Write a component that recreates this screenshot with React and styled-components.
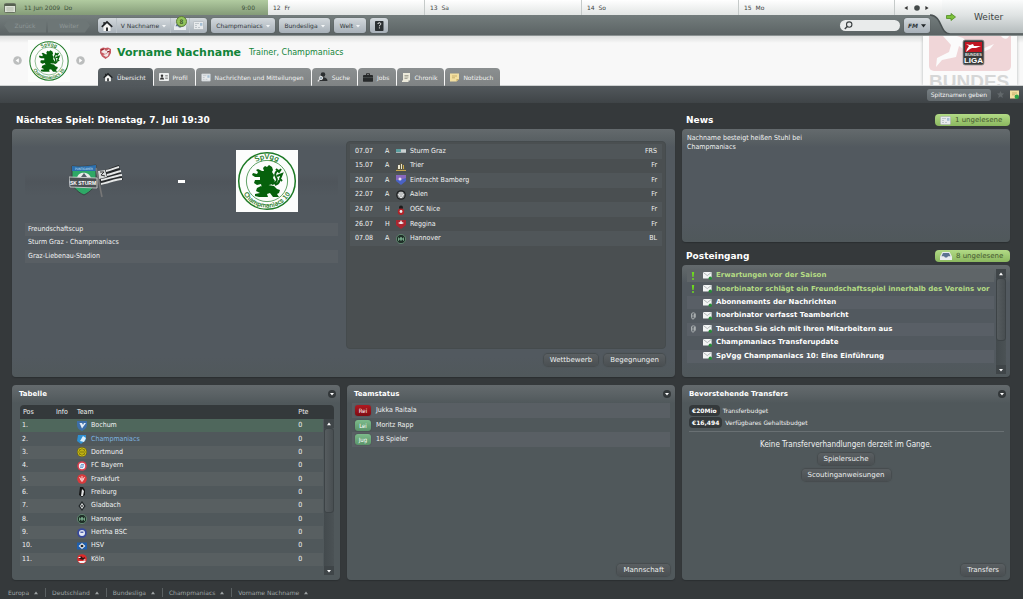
import React from "react";
import styled, { createGlobalStyle, css } from "styled-components";

const Global = createGlobalStyle`
  * { box-sizing: border-box; }
  html, body { margin: 0; padding: 0; background: #35393b; }
  body, button, input, table {
    font-family: "DejaVu Sans Condensed", "DejaVu Sans", Verdana, sans-serif;
    font-size: 7px;
    line-height: 9px;
    color: #f0f2f2;
  }
  button { margin: 0; padding: 0; border: 0; background: none; white-space: nowrap; }
  a { color: inherit; text-decoration: none; }
  h1, h2, h3, p, ul, ol { margin: 0; padding: 0; }
  ul, ol { list-style: none; }
  svg { display: block; flex: none; }
`;

const wide = css`font-family: "DejaVu Sans", Verdana, sans-serif;`;

const Page = styled.div`
  position: relative;
  display: flex;
  flex-direction: column;
  min-height: 100vh;
`;

/* ---------- calendar ---------- */

const Calendar = styled.div`
  ${wide}
  display: grid;
  grid-template-columns: 268fr 157fr 157fr 157fr 156fr 128fr;
  height: 15px;
  font-size: 6px;
  line-height: 15px;
  color: #3c4343;
  background: linear-gradient(#ffffff, #e2e5e4);
`;
const Today = styled.div`
  display: flex;
  align-items: center;
  padding: 0 13px 0 4px;
  color: #3d5138;
  background: linear-gradient(#b1cba0, #849b78);
  time { flex: 1; padding-left: 8px; white-space: pre; }
`;
const Day = styled.div`
  padding-left: 5px;
  white-space: pre;
  border-right: 1px solid #c5cac9;
`;
const DayPager = styled.div`
  display: flex;
  align-items: center;
  gap: 5px;
  padding-left: 9px;
`;
const PagerButton = styled.button`
  width: 5px;
  height: 7px;
`;

/* ---------- toolbar ---------- */

const Toolbar = styled.div`
  ${wide}
  display: flex;
  align-items: center;
  gap: 4px;
  height: 21px;
  padding: 1px 93px 0 4px;
  background: linear-gradient(#747d7d, #5b6364);
  border-bottom: 1px solid #8b9292;
`;
const HistoryButton = styled.button`
  ${wide}
  width: 42px;
  height: 14px;
  font-size: 6px;
  color: #8f9797;
  background: #6d7676;
  clip-path: ${(p) => (p.$back
    ? "polygon(0 50%, 12% 0, 100% 0, 100% 100%, 12% 100%)"
    : "polygon(0 0, 88% 0, 100% 50%, 88% 100%, 0 100%)")};
`;
const History = styled.div`
  display: flex;
  gap: 2px;
  margin-right: 4px;
`;
const NavGroup = styled.div`
  display: flex;
  height: 15px;
  border-radius: 3px;
  background: linear-gradient(#d3d9dd, #a7b0b8);
  box-shadow: 0 0 1px #3d4444;
`;
const NavButton = styled.button`
  ${wide}
  position: relative;
  display: flex;
  align-items: center;
  justify-content: center;
  gap: 3px;
  min-width: ${(p) => p.$min || 18}px;
  padding: 0 3px;
  font-size: 6px;
  color: #30373a;
  & + & { border-left: 1px solid #b9c1c7; }
`;
const Badge = styled.span`
  position: absolute;
  left: 5px;
  top: -2px;
  width: 11px;
  height: 11px;
  border-radius: 50%;
  border: 1px solid #5d7c35;
  background: #94c45c;
  font-size: 6px;
  line-height: 9px;
  text-align: center;
  color: #27361a;
`;
const Spacer = styled.div`flex: 1;`;
const Search = styled.label`
  display: flex;
  align-items: center;
  width: 60px;
  height: 11px;
  padding-left: 4px;
  border-radius: 6px;
  background: #e9ebeb;
  input {
    width: 44px;
    border: 0;
    padding: 0 2px;
    background: none;
    color: #333;
    outline: none;
  }
`;
const Continue = styled.button`
  ${wide}
  position: absolute;
  top: 0;
  right: 0;
  display: flex;
  align-items: center;
  gap: 18px;
  width: 93px;
  height: 34px;
  padding-left: 16px;
  font-size: 9px;
  color: #3d4444;
  > svg:first-child { position: absolute; left: 0; top: 0; }
  > * { position: relative; }
`;

/* ---------- header ---------- */

const Header = styled.header`
  display: flex;
  height: 50px;
  background: linear-gradient(#dcdedd, #f8f8f8 7px);
  border-bottom: 1px solid #cfd2d2;
`;
const Switcher = styled.div`
  display: flex;
  align-items: center;
  gap: 6px;
  width: 98px;
  padding-left: 13px;
`;
const Identity = styled.div`
  flex: 1;
  display: flex;
  flex-direction: column;
  justify-content: space-between;
  min-width: 0;
`;
const TitleRow = styled.div`
  ${wide}
  display: flex;
  align-items: center;
  padding: 10px 0 0 2px;
  color: #128438;
  h1 { margin: 0 8px 0 6px; font-size: 11px; line-height: 14px; font-weight: bold; }
  span { font-size: 8px; line-height: 12px; }
`;
const Tabs = styled.nav`
  display: flex;
  gap: 1px;
  margin-bottom: -1px;
`;
const Tab = styled.a`
  ${wide}
  display: flex;
  align-items: center;
  gap: 4px;
  height: 18px;
  padding: 0 7px 0 5px;
  border-radius: 4px 4px 0 0;
  font-size: 6px;
  color: #f2f3f3;
  background: ${(p) => (p.$active ? "linear-gradient(#5e6568, #51575b)" : "linear-gradient(#8b8f90, #7f8384)")};
`;
const League = styled.div`
  width: 94px;
  margin-right: 6px;
  overflow: hidden;
  background: #fbfbfb;
  box-shadow: 0 0 3px #aeb2b2;
  clip-path: inset(0 -3px);
`;
const Subbar = styled.div`
  display: flex;
  align-items: center;
  justify-content: flex-end;
  gap: 5px;
  height: 17px;
  padding-right: 4px;
  background: linear-gradient(#52585c, #3f4447);
`;
const Nickname = styled.button`
  ${wide}
  height: 12px;
  padding: 0 4px;
  border-radius: 3px;
  font-size: 6px;
  color: #f6f6f6;
  background: linear-gradient(#767e82, #62696d);
`;

/* ---------- panels ---------- */

const Main = styled.main`
  flex: 1;
  display: flex;
  flex-direction: column;
  gap: 8px;
  padding: 0 13px 0 12px;
`;
const Row = styled.div`
  display: grid;
  grid-template-columns: repeat(3, minmax(0, 1fr));
  gap: 7px;
  flex: ${(p) => (p.$grow ? 1 : "none")};
`;
const Section = styled.section`
  display: flex;
  flex-direction: column;
  grid-column: span ${(p) => p.$span || 1};
`;
const SectionHead = styled.div`
  display: flex;
  align-items: flex-end;
  justify-content: space-between;
  height: ${(p) => (p.$first ? 26 : 23)}px;
  padding: 0 0 3px 4px;
  h2 { ${wide} font-size: 9px; line-height: 12px; font-weight: bold; color: #fff; }
`;
const Unread = styled.button`
  ${wide}
  display: flex;
  align-items: center;
  gap: 4px;
  width: 75px;
  height: 12px;
  padding-left: 5px;
  border-radius: 4px;
  color: #46582f;
  background: linear-gradient(#b2da86, #8bb85f);
`;
const Panel = styled.div`
  display: flex;
  flex-direction: column;
  flex: ${(p) => (p.$fill ? 1 : "none")};
  min-height: ${(p) => p.$min || 0}px;
  border-radius: 4px;
  background: linear-gradient(#646a6d, #5b6265 9px, ${(p) => (p.$blue ? "#52595f 18px, #52595f calc(100% - 20px)" : "#50585b 18px")}, #50585b);
  box-shadow: 0 1px 1px #2b2f31;
`;
const PanelHead = styled.div`
  display: flex;
  align-items: center;
  justify-content: space-between;
  height: 18px;
  padding: 0 4px 0 7px;
  h3 { ${wide} font-size: 7px; font-weight: bold; color: #fff; }
`;
const MenuButton = styled.button`
  display: grid;
  place-items: center;
  width: 8px;
  height: 8px;
  border-radius: 50%;
  background: #33383a;
`;
const Action = styled.button`
  ${wide}
  height: 12px;
  padding: 0 6px;
  border-radius: 4px;
  color: #eceeee;
  background: linear-gradient(#5a5f62, #4a4f52);
  box-shadow: 0 0 1px 1px #464c4e;
`;
const Actions = styled.div`
  display: flex;
  justify-content: flex-end;
  gap: 6px;
  margin-top: auto;
  padding: 0 5px 4px;
`;

/* ---------- next match ---------- */

const MatchGrid = styled.div`
  flex: 1;
  display: grid;
  grid-template-columns: minmax(0, 334fr) minmax(0, 329fr);
`;
const MatchInfo = styled.div`
  padding: 21px 8px 0 13px;
`;
const Teams = styled.div`
  display: grid;
  grid-template-columns: 142fr 28fr 143fr;
  align-items: center;
  justify-items: center;
  height: 62px;
  margin-bottom: 11px;
  background: linear-gradient(transparent 24px, #4f555b 32px, transparent 46px);
`;
const Dash = styled.div`
  width: 7px;
  height: 3px;
  background: #fff;
`;
const Facts = styled.ul`
  display: flex;
  flex-direction: column;
  height: ${(p) => p.$height}px;
`;
const Fact = styled.li`
  flex: 1;
  display: flex;
  align-items: center;
  gap: 5px;
  padding: 0 3px;
  &:nth-child(odd) { background: #595f64; }
`;
const Fixtures = styled.div`
  display: flex;
  flex-direction: column;
  padding: 12px 9px 11px 0;
`;
const FixtureBox = styled.div`
  flex: 1;
  margin-bottom: 5px;
  padding: 2px 3px;
  border-radius: 4px;
  border: 1px solid #454b4d;
  background: #4a4f51;
`;
const Data = styled.table`
  width: 100%;
  height: ${(p) => p.$height}px;
  border-collapse: collapse;
  table-layout: fixed;
  td, th { padding: 0; text-align: left; font-weight: normal; vertical-align: middle; }
  tbody tr:nth-child(odd) { background: ${(p) => p.$stripe}; }
  tbody tr.top { background: #4f675c; }
`;
const Col = styled.col`
  width: ${(p) => (p.$w ? `${p.$w}px` : "auto")};
`;
const FixtureData = styled(Data)`
  td:first-child { padding-left: 5px; }
  td:last-child { padding-right: 5px; text-align: right; }
`;
const Club = styled.span`
  display: flex;
  align-items: center;
  gap: 4px;
  color: ${(p) => (p.$own ? "#7db4e0" : "inherit")};
`;
const FixtureFoot = styled.div`
  display: flex;
  justify-content: flex-end;
  gap: 6px;
  padding-right: 1px;
`;

/* ---------- inbox ---------- */

const InboxBody = styled.div`
  flex: 1;
  display: flex;
  gap: 2px;
  padding: 4px 4px 3px 5px;
`;
const Mails = styled.ul`
  flex: 1;
  display: flex;
  flex-direction: column;
  height: 94px;
  min-width: 0;
`;
const Mail = styled.li`
  ${wide}
  flex: 1;
  display: grid;
  grid-template-columns: 12px 9px 1fr;
  align-items: center;
  column-gap: 4px;
  font-weight: bold;
  white-space: nowrap;
  color: ${(p) => (p.$urgent ? "#b4dc84" : "#fff")};
  > :first-child { justify-self: center; }
  &:nth-child(odd) { background: #595f66; }
  &:first-child { background: #5f6568; }
`;
const Track = styled.div`
  display: flex;
  flex-direction: column;
  width: 10px;
  margin-top: ${(p) => p.$top || 0}px;
  background: linear-gradient(90deg, #434a4d, #4b5255);
`;
const TrackButton = styled.button`
  display: grid;
  place-items: center;
  height: 9px;
  background: #3f4548;
`;
const Thumb = styled.div`
  flex: ${(p) => p.$part} 1 0;
  border-radius: 3px;
  border: 1px solid #3d4346;
  background: linear-gradient(90deg, #565c5f, #484e51);
`;
const Rest = styled.div`flex: ${(p) => p.$part} 1 0;`;

/* ---------- bottom row ---------- */

const Standings = styled.div`
  flex: 1;
  display: flex;
  gap: 1px;
  margin: 2px 6px 5px 8px;
  border-radius: 4px 4px 0 0;
  background: linear-gradient(#34393b 14px, transparent 14px);
  > table { align-self: flex-start; }
  thead th { height: 14px; }
  thead th:first-child { padding-left: 3px; }
  tbody td:first-child { padding-left: 2px; }
`;
const StatusList = styled.div`
  padding: 0 5px;
`;
const StatusTag = styled.span`
  width: 16px;
  height: 11px;
  border-radius: 3px;
  font-size: 6px;
  line-height: 11px;
  text-align: center;
  color: #fff;
  background: ${(p) => (p.$bad ? "linear-gradient(#b01820, #7d0c12)" : "linear-gradient(#7dbb8b, #5a9469)")};
  box-shadow: 0 0 1px #333;
`;
const Budget = styled.div`
  display: flex;
  flex-direction: column;
  gap: 1px;
  margin: 2px 6px 8px 7px;
  padding-bottom: 3px;
  border-bottom: 1px solid #697073;
`;
const BudgetLine = styled.p`
  ${wide}
  display: flex;
  align-items: center;
  gap: 3px;
  font-size: 6px;
  strong {
    height: 11px;
    padding: 0 3px;
    border-radius: 4px;
    line-height: 11px;
    color: #fff;
    background: #34393b;
  }
`;
const Empty = styled.div`
  display: flex;
  flex-direction: column;
  align-items: center;
  gap: 4px;
  p { font-size: 8px; line-height: 10px; margin-bottom: -1px; }
`;
const NewsText = styled.a`
  max-width: 140px;
  padding: 5px;
`;

const Footer = styled.footer`
  ${wide}
  display: flex;
  align-items: center;
  height: 19px;
  padding: 6px 0 0 8px;
  font-size: 6px;
  color: #9fa4a5;
  a {
    display: flex;
    align-items: center;
    gap: 5px;
    padding-right: 7px;
    margin-right: 6px;
    border-right: 1px solid #5a6062;
  }
  a:last-child { border: 0; }
`;

/* ---------- drawings ---------- */

const Tri = ({ dir = "down", size = 4, color = "#fff" }) => {
  const d = { down: "M0 1h4L2 3.6z", up: "M0 3.2h4L2 .6z", left: "M3.6 0v4L.4 2z", right: "M.4 0v4L3.6 2z" }[dir];
  return <svg width={size} height={size} viewBox="0 0 4 4"><path d={d} fill={color} /></svg>;
};

const ClubBadge = ({ size, id }) => (
  <svg width={size} height={size} viewBox="0 0 62 62" role="img" aria-label="SpVgg Champmaniacs 10">
    <rect width="62" height="62" fill="#fcfdfc" />
    <g fill="none" stroke="#1d7a25">
      <circle cx="31" cy="31" r="28.3" strokeWidth="1.5" />
      <circle cx="31" cy="31" r="20.6" strokeWidth=".7" />
      <path id={`${id}t`} d="M9 31a22 22 0 0 1 44 0" stroke="none" />
      <path id={`${id}b`} d="M4.500 31a26.500 26.500 0 0 0 53 0" stroke="none" />
    </g>
    <g fill="#1d7a25" stroke="#1d7a25" strokeWidth=".2" fontFamily="DejaVu Sans">
      <text textAnchor="middle" fontSize="7"><textPath href={`#${id}t`} startOffset="50%">SpVgg</textPath></text>
      <text textAnchor="middle" fontSize="6"><textPath href={`#${id}b`} startOffset="50%">Champmaniacs 10</textPath></text>
    </g>
    <path fill="#06610c" d="M27 18l2-2 2 1 2-2 3 2 1 3-1 2 2 3-1 3 2 3-2 3-4 1-3 4-4-1-1-4-4 1-3-2 1-3 5 0 0-3-5 0-3-2 1-2 4 1 1-2-2-2 2-1 4 2 2 0z" />
    <path fill="none" stroke="#06610c" strokeWidth="2" d="M36 34c5-1 6-4 4-7-2-3 0-7 4-6M40 19l3 3 2-3M41 26l5-2-2 5 2 2M43 30c1 3-2 4-4 5" />
    <path fill="#06610c" d="M21 38l4-2 3 2 4-3 6 1 3 3 3 1-1 3-2 1 2 3-6 0-3-4-3 1 1 3-9 0-4-1 0-2 5-1-4-2z" />
  </svg>
);

const SturmGraz = () => (
  <svg width="54" height="34" viewBox="0 0 54 34" role="img" aria-label="SK Sturm Graz">
    <path d="M3 2c8 1 16 0 24-1v13c0 9-6 14-12 17C8 28 2 22 3 14z" fill="#2ea866" stroke="#3a3f42" />
    <path d="M3 2c8 1 16 0 24-1v6H3z" fill="#2c6fae" />
    <text x="15" y="6" fontSize="3" textAnchor="middle" fill="#dbe7f2" fontFamily="DejaVu Sans Condensed">PUNTIGAMER</text>
    <path d="M8 14c1-7 12-7 14 0z" fill="#e8ebea" /><path d="M12 13l3-4 3 4z" fill="#55606a" />
    <path d="M29 7c8 0 14-4 21-6 1 6 2 10 4 15-8 0-14 3-22 5z" fill="#26292b" />
    <path d="M37 7c5-1 9-3 13-4M38 11c5-1 9-3 14-4M32 16c7-1 13-4 21-5M32 20c7-1 14-5 21-5" stroke="#e6e8e8" strokeWidth="1.900" fill="none" />
    <path d="M29 7l7-1 2 7-8 2z" fill="#d6d9d9" /><path d="M31 8l4 0-3 3 4 1" stroke="#333" fill="none" />
    <path d="M27 4l6 29" stroke="#777" strokeWidth="1.600" />
    <path d="M0 13l28 1v10L1 23z" fill="#4a5053" stroke="#c9cccc" strokeWidth=".9" />
    <text x="14" y="20.500" fontSize="5" fontWeight="bold" textAnchor="middle" fill="#fff" fontFamily="Liberation Sans">SK STURM</text>
  </svg>
);

const crests = {
  sturm: <><rect y="3" width="10" height="4" fill="#a9b3b5" /><rect y="3" width="5" height="3" fill="#5a9fa0" /><path d="M5 5h5" stroke="#eee" /></>,
  trier: <><path d="M0 10l2-5 3-4 3 4 2 5z" fill="#5d5840" /><path d="M2 4h2v4H2zM5 3h1v5H5z" fill="#e8e5cf" /><path d="M7 4h1v4H7zM0 9h10v1H0z" fill="#c9a84a" /></>,
  bamberg: <><path d="M0 0h10v6L5 10 0 6z" fill="#4a62c4" /><path d="M0 0h10v3L4 5 0 5z" fill="#8768bd" /><circle cx="4" cy="4" r="1.500" fill="#e6dff2" /></>,
  aalen: <><circle cx="5" cy="5" r="4.800" fill="#1d1f20" /><circle cx="5" cy="5" r="3.500" fill="#8f9394" /><path d="M2 4l3 4 3-4M4 2v4M6 2v4" stroke="#eee" fill="none" /></>,
  nice: <><circle cx="5" cy="2.500" r="2" fill="#1c1c1c" /><circle cx="5" cy="6.700" r="3.200" fill="#b12228" /><circle cx="5" cy="6.500" r="1.400" fill="#eee" /></>,
  reggina: <><path d="M0 1h10v5L5 10 0 6z" fill="#a92630" /><path d="M2 4l2-1 1-2 1 2 2 1-2 1H4z" fill="#f0e8e8" /></>,
  hannover: <><circle cx="5" cy="5" r="4.600" fill="#1f2f28" stroke="#78ae8c" strokeWidth=".6" /><path d="M2.500 3.500v3l2-3v3M5.500 6.500v-3l2 3v-3" fill="none" stroke="#8fcfa6" strokeWidth=".7" /></>,
  bochum: <><path d="M0 0h10v4C10 7 7 9 5 10 2 9 0 7 0 4z" fill="#3d6ea8" /><path d="M2.500 2l2.500 5.500L9 2z" fill="#e6edf5" /><path d="M5 2l1 2 1-2z" fill="#3d6ea8" /></>,
  champ: <><path d="M1 1h8v5L4 10 0 7z" fill="#2f8fd0" /><path d="M3 7l3-5 3 2-2 4z" fill="#dceefa" /></>,
  dortmund: <><circle cx="5" cy="5" r="4.800" fill="#e0cf14" stroke="#3b380c" strokeWidth=".5" /><circle cx="5" cy="5" r="3.200" fill="none" stroke="#2a280a" strokeWidth=".6" /><path d="M4 3.500v3M6 3.500v3" stroke="#2a280a" strokeWidth=".7" /></>,
  bayern: <><circle cx="5" cy="5" r="4.800" fill="#d8404f" /><circle cx="5" cy="5" r="3.200" fill="#eef2f8" /><path d="M3 5h4M4 3.600h3M3 6.400h3" stroke="#4b86c4" strokeWidth=".8" /></>,
  frankfurt: <><circle cx="5" cy="5" r="4.800" fill="#d93a3c" /><path d="M2.500 3l2 4M7.500 3l-2 4M5 2v6M3 5h4" stroke="#f8dede" strokeWidth=".9" /></>,
  freiburg: <><path d="M3 0h3l2 3v5L5 10 2 8z" fill="#151616" /><path d="M5 2l2 2-1 5H4z" fill="#dfe1e1" /></>,
  gladbach: <><path d="M5 0l3.600 5L5 10 1.400 5z" fill="#22282a" /><path d="M5 2l2 3-2 3-2-3z" fill="#dfe3e3" /><path d="M5 3.800l1 1.200-1 1.200L4 5z" fill="#222" /></>,
  hertha: <><circle cx="5" cy="5" r="4.800" fill="#35479b" /><circle cx="5" cy="5" r="3" fill="#e2e6f2" /><path d="M3.400 3.500h3v1.500h-3z" fill="#5666b0" /></>,
  hsv: <><rect y="1.500" width="10" height="7" fill="#1f5fae" /><path d="M5 2l3.400 3L5 8 1.600 5z" fill="#f2f4f5" /><path d="M5 3.400L6.800 5 5 6.600 3.200 5z" fill="#1a1c1e" /></>,
  koeln: <><circle cx="5" cy="5" r="4.800" fill="#dc2a2a" /><path d="M1 7h8L7 9H3z" fill="#f3f3f3" /><path d="M2 5l2-3 2 2 2-1-1 3z" fill="#2a1414" /><path d="M1.500 3.500h2M6.500 6h2" stroke="#fff" /></>,
};
const Crest = ({ name }) => <svg width="10" height="10" viewBox="0 0 10 10">{crests[name]}</svg>;

const HomeIcon = ({ size = 10 }) => (
  <svg width={size} height={size} viewBox="0 0 12 12">
    <path d="M2.500 6.500L6 3.500l3.500 3V11h-7z" fill="#f4f4f2" />
    <path d="M5 7.500h2V11H5z" fill="#2c2f31" />
    <path d="M.8 6.800L6 2l5.200 4.800" fill="none" stroke="#202325" strokeWidth="1.700" />
    <path d="M2.400 2h1.400v2.400H2.400z" fill="#202325" />
  </svg>
);
const NewsIcon = ({ w = 11 }) => (
  <svg width={w} height="9" viewBox="0 0 11 9">
    <rect x=".5" y=".5" width="10" height="8" rx=".8" fill="#e7eaec" stroke="#a9b0b5" strokeWidth=".6" />
    <path d="M2 2.500h4M2 6.500h2M5 6.500h2M2 4.500h2" stroke="#b5bcc2" strokeWidth=".8" />
    <rect x="7" y="2" width="2.400" height="2.800" fill="#a5bfd4" />
  </svg>
);
const TrayIcon = () => (
  <svg width="12" height="8" viewBox="0 0 12 8">
    <path d="M2.400 0h7.200L12 4.500V8H0V4.500z" fill="#e9ecef" />
    <path d="M3 1h6l1.500 3.200H8L7 5.500H5L4 4.200H1.500z" fill="#5c7391" />
  </svg>
);
const ProfileIcon = () => (
  <svg width="10" height="8" viewBox="0 0 10 8">
    <rect width="10" height="8" rx=".8" fill="#eceeee" />
    <circle cx="3" cy="2.800" r="1.200" fill="#333" /><path d="M1 6.500c0-3 4-3 4 0z" fill="#333" />
    <path d="M6.200 2.500h2.600M6.200 4h2.600M6.200 5.500h2.600" stroke="#777" strokeWidth=".7" />
  </svg>
);
const SeekIcon = () => (
  <svg width="11" height="10" viewBox="0 0 11 10">
    <circle cx="6" cy="2.600" r="2.300" fill="#2b2e30" /><path d="M2 9c0-5 8.500-5 8.500 0z" fill="#2b2e30" />
    <circle cx="4" cy="6" r="1.700" fill="#9fb0ba" stroke="#eee" strokeWidth=".8" /><path d="M2.800 7.300L.8 9.300" stroke="#eee" strokeWidth="1.200" />
  </svg>
);
const CaseIcon = () => (
  <svg width="10" height="9" viewBox="0 0 10 9">
    <path d="M3.500 2V.7h3V2" fill="none" stroke="#222" strokeWidth=".9" />
    <rect y="2" width="10" height="6.800" rx=".9" fill="#26292a" /><path d="M0 4.600h10" stroke="#5b5f60" strokeWidth=".6" />
  </svg>
);
const ScrollIcon = () => (
  <svg width="8" height="9" viewBox="0 0 8 9">
    <path d="M1 0h7v7.500H6.500V9H0V7.500h1z" fill="#eceadb" />
    <path d="M2.500 2.500h4M2.500 4h4M2.500 5.500h3" stroke="#8b8a7c" strokeWidth=".7" />
  </svg>
);
const NoteIcon = ({ add }) => (
  <svg width="9" height="9" viewBox="0 0 9 9">
    <path d="M0 .5h9V6L6.500 8.500H0z" fill="#f3dfa0" /><path d="M9 6H6.500v2.500z" fill="#c8ae67" />
    <path d="M2 3h5M2 4.800h3" stroke="#b79e5a" strokeWidth=".7" />
    {add && <circle cx="6.800" cy="6.800" r="2.200" fill="#2da348" />}
  </svg>
);
const MailIcon = () => (
  <svg width="9" height="8" viewBox="0 0 9 8">
    <rect width="8.600" height="6.600" rx=".4" fill="#f3f5f5" />
    <path d="M.2.4L4.300 3.600 8.400.4" fill="none" stroke="#969d9f" strokeWidth=".7" />
    <circle cx="7.300" cy="6.300" r="1.700" fill="#278a3a" />
  </svg>
);
const ClipIcon = () => (
  <svg width="6" height="8" viewBox="0 0 6 8">
    <path d="M4.500 2v3.500c0 2-3 2-3 0V2c0-1.600 3.800-1.600 3.800 0v3.600M3 2.500v3" fill="none" stroke="#bcc1c2" strokeWidth=".8" />
  </svg>
);
const AlertIcon = () => (
  <svg width="4" height="8" viewBox="0 0 4 8">
    <path d="M.8 0h2.400L2.600 5H1.400z" fill="#6edb1e" /><circle cx="2" cy="6.900" r="1" fill="#6edb1e" />
  </svg>
);
const CalendarIcon = () => (
  <svg width="12" height="10" viewBox="0 0 12 10">
    <rect x=".5" y=".5" width="11" height="9" rx="1" fill="#dde3d8" stroke="#55604f" strokeWidth=".8" />
    <path d="M.5 1h11v2H.5z" fill="#55604f" />
    <path d="M2 5h8M2 7h8M4 4v5M6 4v5M8 4v5" stroke="#a4ad9e" strokeWidth=".5" />
  </svg>
);
const Crossed = () => (
  <svg width="11" height="12" viewBox="0 0 11 12">
    <path d="M0 2l3-1.500L5.500 1 8 .5 11 2v4L9 9.500 5.500 12 2 9.500 0 6z" fill="#c65a62" />
    <path d="M1 5l3-3 2 2 3-2 1 2-5 3zM3 8l3-1 3-2-1 4-2 1z" fill="#f1e6e6" />
    <path d="M1 3l3-1M7 5l3-1" stroke="#8d1f28" />
  </svg>
);
const Step = ({ dir }) => (
  <svg width="9" height="9" viewBox="0 0 9 9">
    <circle cx="4.500" cy="4.500" r="4.300" fill="#bcbebe" />
    <path d={dir === "left" ? "M5.800 2.200v4.600L2.700 4.500z" : "M3.200 2.200v4.600l3.100-2.300z"} fill="#fff" />
  </svg>
);
const LeagueArt = () => (
  <svg width="94" height="50" viewBox="0 0 94 50" role="img" aria-label="Bundesliga">
    <path d="M6 0h82v30a5 5 0 0 1-5 5H11a5 5 0 0 1-5-5z" fill="#f0d6d8" />
    <path d="M20 0l14 0 6 2 9 8 10 3 12-5-4 5-10 4-14-2-7-5-3 11-14 3-6 7 1-9 12-6 2-7z" fill="#fbfbfb" />
    <path d="M78 0h8c-1 3-5 4-8 0z" fill="#fbfbfb" />
    <text x="6" y="52" fontFamily="Liberation Sans" fontWeight="bold" fontSize="19" fill="#d6d7d7">BUNDES</text>
    <rect x="40" y="4" width="21" height="25" rx="2" fill="#3b3b3b" stroke="#999" strokeWidth=".8" />
    <rect x="42" y="6" width="17" height="10" fill="#c01622" />
    <path d="M43 8l4 1 3-1 1 2 7 0-5 2-4 0-2 1-4 3 1-3 2-3z" fill="#fff" />
    <text x="50.500" y="20" fontFamily="Liberation Sans" fontWeight="bold" fontSize="4" textAnchor="middle" fill="#ddd">BUNDES</text>
    <text x="50.500" y="27" fontFamily="Liberation Sans" fontWeight="bold" fontSize="8" textAnchor="middle" fill="#fff">LIGA</text>
  </svg>
);

/* ---------- data ---------- */

const fixtures = [
  ["07.07", "A", "sturm", "Sturm Graz", "FRS"],
  ["15.07", "A", "trier", "Trier", "Fr"],
  ["20.07", "A", "bamberg", "Eintracht Bamberg", "Fr"],
  ["22.07", "A", "aalen", "Aalen", "Fr"],
  ["24.07", "H", "nice", "OGC Nice", "Fr"],
  ["26.07", "H", "reggina", "Reggina", "Fr"],
  ["07.08", "A", "hannover", "Hannover", "BL"],
];
const mails = [
  ["alert", "Erwartungen vor der Saison"],
  ["alert", "hoerbinator schlägt ein Freundschaftsspiel innerhalb des Vereins vor"],
  [null, "Abonnements der Nachrichten"],
  ["clip", "hoerbinator verfasst Teambericht"],
  ["clip", "Tauschen Sie sich mit Ihren Mitarbeitern aus"],
  [null, "Champmaniacs Transferupdate"],
  [null, "SpVgg Champmaniacs 10: Eine Einführung"],
];
const standings = [
  ["bochum", "Bochum"], ["champ", "Champmaniacs"], ["dortmund", "Dortmund"], ["bayern", "FC Bayern"],
  ["frankfurt", "Frankfurt"], ["freiburg", "Freiburg"], ["gladbach", "Gladbach"], ["hannover", "Hannover"],
  ["hertha", "Hertha BSC"], ["hsv", "HSV"], ["koeln", "Köln"],
];
const tabs = [
  ["Übersicht", <HomeIcon />], ["Profil", <ProfileIcon />], ["Nachrichten und Mitteilungen", <NewsIcon w={10} />],
  ["Suche", <SeekIcon />], ["Jobs", <CaseIcon />], ["Chronik", <ScrollIcon />], ["Notizbuch", <NoteIcon />],
];

const ScrollBar = ({ thumb, rest, top }) => (
  <Track $top={top}>
    <TrackButton aria-label="Nach oben"><Tri dir="up" /></TrackButton>
    <Thumb $part={thumb} />
    <Rest $part={rest} />
    <TrackButton aria-label="Nach unten"><Tri /></TrackButton>
  </Track>
);
const TitledPanel = ({ title, children }) => (
  <Panel as="section">
    <PanelHead>
      <h3>{title}</h3>
      <MenuButton aria-label={`Menü ${title}`}><Tri /></MenuButton>
    </PanelHead>
    {children}
  </Panel>
);
const NavDrop = ({ children, min }) => (
  <NavGroup><NavButton $min={min}>{children}<Tri color="#f4f6f7" /></NavButton></NavGroup>
);

export default function App() {
  return (
    <Page>
      <Global />
      <Calendar>
        <Today><CalendarIcon /><time>{"11 Jun 2009  Do"}</time><span>9:00</span></Today>
        <Day>{"12  Fr"}</Day>
        <Day>{"13  Sa"}</Day>
        <Day>{"14  So"}</Day>
        <Day>{"15  Mo"}</Day>
        <DayPager>
          <PagerButton aria-label="Früher"><Tri dir="left" color="#333" /></PagerButton>
          <svg width="6" height="6"><circle cx="3" cy="3" r="2.800" fill="#444a4a" /></svg>
          <PagerButton aria-label="Später"><Tri dir="right" color="#333" /></PagerButton>
        </DayPager>
      </Calendar>
      <Toolbar>
        <History>
          <HistoryButton $back>Zurück</HistoryButton>
          <HistoryButton>Weiter</HistoryButton>
        </History>
        <NavGroup>
          <NavButton aria-label="Start"><HomeIcon size={12} /></NavButton>
          <NavButton $min={54}>V Nachname<Tri color="#f4f6f7" /></NavButton>
          <NavButton aria-label="Postfach"><TrayIcon /><Badge>8</Badge></NavButton>
          <NavButton aria-label="Nachrichten"><NewsIcon /></NavButton>
        </NavGroup>
        <NavDrop min={64}>Champmaniacs</NavDrop>
        <NavDrop min={51}>Bundesliga</NavDrop>
        <NavDrop min={32}>Welt</NavDrop>
        <NavGroup>
          <NavButton aria-label="Hilfe">
            <svg width="9" height="10" viewBox="0 0 9 10">
              <rect width="8.500" height="10" rx=".8" fill="#2b3032" />
              <path d="M2.800 3c.2-1.800 3.400-1.600 3 .2C5.600 4 4.400 4 4.400 5.300M4.400 6.400v1" stroke="#fff" fill="none" />
            </svg>
          </NavButton>
        </NavGroup>
        <Spacer />
        <Search>
          <svg width="9" height="9" viewBox="0 0 9 9">
            <circle cx="5.200" cy="3.600" r="2.700" fill="none" stroke="#3b4042" strokeWidth="1.100" />
            <path d="M3.200 5.600L.8 8" stroke="#3b4042" strokeWidth="1.400" />
          </svg>
          <input type="text" aria-label="Suche" />
        </Search>
        <NavGroup>
          <NavButton $min={26}><b><i>FM</i></b><Tri color="#22272a" size={5} /></NavButton>
        </NavGroup>
      </Toolbar>
      <Continue>
        <svg width="93" height="34" viewBox="0 0 93 34">
          <defs>
            <linearGradient id="cont" x1="0" y1="0" x2="0" y2="1">
              <stop offset="0" stopColor="#fbfcfc" /><stop offset=".45" stopColor="#dfe3e3" /><stop offset="1" stopColor="#b3babb" />
            </linearGradient>
          </defs>
          <path d="M0 15C13 16 9 33 20 34H93V0H12V15z" fill="url(#cont)" />
          <path d="M0 15C13 16 9 33 20 34H93" fill="none" stroke="#4a5152" strokeWidth="1.500" />
        </svg>
        <svg width="10" height="8" viewBox="0 0 10 8">
          <path d="M.5 2.500h4.500V.5L9.500 4 5 7.500v-2H.5z" fill="#7cc13a" stroke="#4f8c22" strokeWidth=".8" />
        </svg>
        <span>Weiter</span>
      </Continue>

      <Header>
        <Switcher>
          <Step dir="left" />
          <ClubBadge size={42} id="s" />
          <Step dir="right" />
        </Switcher>
        <Identity>
          <TitleRow>
            <Crossed />
            <h1>Vorname Nachname</h1>
            <span>Trainer, Champmaniacs</span>
          </TitleRow>
          <Tabs>
            {tabs.map(([label, icon], i) => (
              <Tab key={label} href="#" $active={i === 0}>{icon}{label}</Tab>
            ))}
          </Tabs>
        </Identity>
        <League><LeagueArt /></League>
      </Header>
      <Subbar>
        <Nickname>Spitznamen geben</Nickname>
        <svg width="9" height="9" viewBox="0 0 10 10">
          <path d="M5 1l1.200 2.700 2.800.3-2.100 1.900.6 2.900L5 7.300 2.500 8.800l.6-2.900L1 4l2.800-.3z" fill="#62686b" />
        </svg>
        <NoteIcon add />
      </Subbar>

      <Main>
        <Row>
          <Section $span={2}>
            <SectionHead $first><h2>Nächstes Spiel: Dienstag, 7. Juli 19:30</h2></SectionHead>
            <Panel $blue $fill>
              <MatchGrid>
                <MatchInfo>
                  <Teams><SturmGraz /><Dash /><ClubBadge size={62} id="m" /></Teams>
                  <Facts $height={40}>
                    <Fact>Freundschaftscup</Fact>
                    <Fact>Sturm Graz - Champmaniacs</Fact>
                    <Fact>Graz-Liebenau-Stadion</Fact>
                  </Facts>
                </MatchInfo>
                <Fixtures>
                  <FixtureBox>
                    <FixtureData $height={102} $stripe="#505659">
                      <colgroup><Col $w={35} /><Col $w={11} /><Col /><Col $w={30} /></colgroup>
                      <tbody>
                        {fixtures.map(([date, loc, crest, name, comp]) => (
                          <tr key={date}>
                            <td>{date}</td>
                            <td>{loc}</td>
                            <td><Club><Crest name={crest} />{name}</Club></td>
                            <td>{comp}</td>
                          </tr>
                        ))}
                      </tbody>
                    </FixtureData>
                  </FixtureBox>
                  <FixtureFoot><Action>Wettbewerb</Action><Action>Begegnungen</Action></FixtureFoot>
                </Fixtures>
              </MatchGrid>
            </Panel>
          </Section>
          <Section>
            <SectionHead $first>
              <h2>News</h2>
              <Unread><NewsIcon />1 ungelesene</Unread>
            </SectionHead>
            <Panel $blue $min={113}>
              <NewsText href="#">Nachname besteigt heißen Stuhl bei Champmaniacs</NewsText>
            </Panel>
            <SectionHead>
              <h2>Posteingang</h2>
              <Unread><TrayIcon />8 ungelesene</Unread>
            </SectionHead>
            <Panel $blue $min={112}>
              <InboxBody>
                <Mails>
                  {mails.map(([flag, text]) => (
                    <Mail key={text} $urgent={flag === "alert"}>
                      <span>{flag === "alert" ? <AlertIcon /> : flag === "clip" ? <ClipIcon /> : null}</span>
                      <MailIcon />
                      <a href="#">{text}</a>
                    </Mail>
                  ))}
                </Mails>
                <ScrollBar thumb={62} rest={25} />
              </InboxBody>
            </Panel>
          </Section>
        </Row>

        <Row $grow>
          <TitledPanel title="Tabelle">
            <Standings>
              <Data $height={161} $stripe="#585f61">
                <colgroup><Col $w={36} /><Col $w={21} /><Col /><Col $w={25} /></colgroup>
                <thead><tr><th>Pos</th><th>Info</th><th>Team</th><th>Pte</th></tr></thead>
                <tbody>
                  {standings.map(([crest, name], i) => (
                    <tr key={name} className={i === 0 ? "top" : undefined}>
                      <td>{i + 1}.</td>
                      <td />
                      <td><Club $own={i === 1}><Crest name={crest} />{name}</Club></td>
                      <td>0</td>
                    </tr>
                  ))}
                </tbody>
              </Data>
              <ScrollBar thumb={85} rest={54} top={14} />
            </Standings>
          </TitledPanel>
          <TitledPanel title="Teamstatus">
            <StatusList>
              <Facts $height={44}>
                <Fact><StatusTag $bad>Rei</StatusTag>Jukka Raitala</Fact>
                <Fact><StatusTag>Lei</StatusTag>Moritz Rapp</Fact>
                <Fact><StatusTag>Jug</StatusTag>18 Spieler</Fact>
              </Facts>
            </StatusList>
            <Actions><Action>Mannschaft</Action></Actions>
          </TitledPanel>
          <TitledPanel title="Bevorstehende Transfers">
            <Budget>
              <BudgetLine><strong>€20Mio</strong>Transferbudget</BudgetLine>
              <BudgetLine><strong>€16,494</strong>Verfügbares Gehaltsbudget</BudgetLine>
            </Budget>
            <Empty>
              <p>Keine Transferverhandlungen derzeit im Gange.</p>
              <Action>Spielersuche</Action>
              <Action>Scoutinganweisungen</Action>
            </Empty>
            <Actions><Action>Transfers</Action></Actions>
          </TitledPanel>
        </Row>
      </Main>

      <Footer>
        {["Europa", "Deutschland", "Bundesliga", "Champmaniacs", "Vorname Nachname"].map((c) => (
          <a key={c} href="#">{c}<Tri dir="up" color="#9fa4a5" /></a>
        ))}
      </Footer>
    </Page>
  );
}
